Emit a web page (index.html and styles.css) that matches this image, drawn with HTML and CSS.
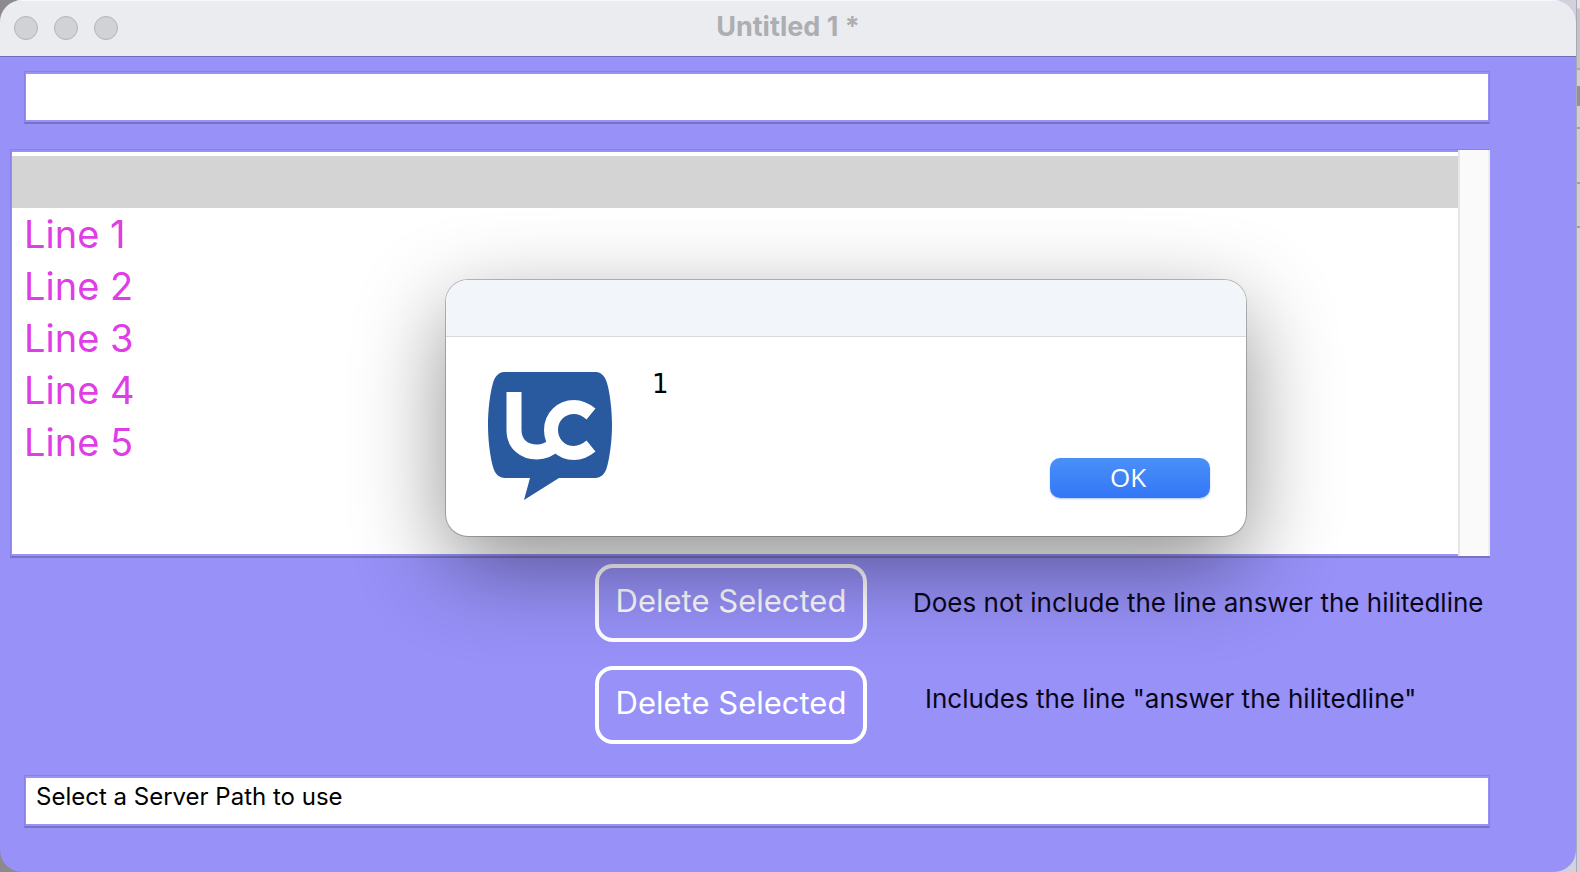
FILE: index.html
```html
<!DOCTYPE html>
<html lang="en">
<head>
    <meta charset="UTF-8">
    <meta name="viewport" content="width=device-width, initial-scale=1.0">
    <title>Untitled 1 *</title>
    <link rel="stylesheet" href="styles.css">
</head>
<body>
<div class="window">
    <header class="titlebar">
        <div class="window-buttons">
            <button type="button" class="window-button" aria-label="Close"></button>
            <button type="button" class="window-button" aria-label="Minimize"></button>
            <button type="button" class="window-button" aria-label="Zoom"></button>
        </div>
        <h1>Untitled 1 *</h1>
    </header>

    <main class="card">
        <input type="text" class="field" aria-label="Entry">

        <div class="list-field">
            <ul class="list">
                <li class="selected"></li>
                <li>Line 1</li>
                <li>Line 2</li>
                <li>Line 3</li>
                <li>Line 4</li>
                <li>Line 5</li>
            </ul>
            <div class="scrollbar"></div>
        </div>

        <div class="actions">
            <div class="action-row">
                <button type="button" class="delete-button">Delete Selected</button>
                <p class="note">Does not include the line answer the hilitedline</p>
            </div>
            <div class="action-row">
                <button type="button" class="delete-button">Delete Selected</button>
                <p class="note note-quoted">Includes the line "answer the hilitedline"</p>
            </div>
        </div>

        <input type="text" class="field" aria-label="Server path" value="Select a Server Path to use">
    </main>
</div>

<!-- Answer dialog -->
<div class="dialog" role="dialog" aria-label="Answer">
    <div class="dialog-header"></div>
    <div class="dialog-body">
        <svg class="logo" viewBox="0 0 124 128" aria-hidden="true">
            <path fill="#295a9f" d="M16 0H108C113 0 117 4 119 11C122 21 124 38 124 53C124 68 122 84 119 95C117 102 113 106 107 106H71L36 128L42 106H17C11 106 7 102 5 95C2 84 0 68 0 53C0 38 2 21 5 11C7 4 11 0 16 0Z"/>
            <path fill="none" stroke="#fff" stroke-width="15" d="M26 20V58C26 72 36 80 49 80C56 80 61 78 66 73"/>
            <path fill="none" stroke="#fff" stroke-width="14" d="M103 42C97 37 92 35 86 35C73 35 63 45 63 58C63 71 73 81 86 81C92 81 97 79 103 74"/>
        </svg>
        <p class="message">1</p>
        <button type="button" class="ok-button">OK</button>
    </div>
</div>

<!-- Edge of the window behind -->
<div class="behind">
    <span class="behind-top"></span>
    <span class="behind-tool"></span>
    <span class="behind-row"></span>
    <span class="behind-row behind-row-last"></span>
</div>
</body>
</html>
```

FILE: styles.css
```css
* {
    box-sizing: border-box;
}

body {
    margin: 0;
    min-height: 100vh;
    display: flex;
    overflow: hidden;
    font-family: Inter, "Liberation Sans", sans-serif;
    background: linear-gradient(90deg, #8d8a8b 50%, #d3d2dc 50%);
    color: #0a0618;
}

h1, p, ul {
    margin: 0;
    padding: 0;
}

button {
    font-family: inherit;
}

.window {
    flex: 1;
    min-height: 100vh;
    background-color: #9791f8;
    border-radius: 22px;
    overflow: hidden;
}

/* Title bar */
.titlebar {
    height: 57px;
    padding: 0 14px 2px;
    display: grid;
    grid-template-columns: 1fr auto 1fr;
    align-items: center;
    background-color: #ebecf0;
    border-top: 1px solid #f8f8fa;
    border-bottom: 1px solid #716cb9;
}

.titlebar h1 {
    font-size: 27px;
    line-height: 32px;
    padding-bottom: 2px;
    color: #adaeb1;
}

.window-buttons {
    display: flex;
    gap: 16px;
}

.window-button {
    width: 24px;
    height: 24px;
    padding: 0;
    border: 1px solid #b2b3b6;
    border-radius: 50%;
    background-color: #d1d2d5;
}

/* Card */
.card {
    padding: 14px 86px 0 10px;
    display: flex;
    flex-direction: column;
}

.field {
    height: 53px;
    margin: 0 0 0 14px;
    padding: 0 11px 10px;
    border: 1px solid #8781e4;
    border-bottom: 2px solid #7772c6;
    border-radius: 0;
    background-color: #fff;
    box-shadow: inset 1px 2px 0 #9791f8, inset -1px -2px 0 #9791f8;
    font-family: inherit;
    font-size: 24px;
    color: #000;
}

.list-field {
    display: flex;
    margin-top: 25px;
    border: 1px solid #8781e4;
    border-bottom: 2px solid #7772c6;
    border-right: 0;
}

.list {
    flex: 1;
    min-height: 406px;
    padding-top: 4px;
    list-style-type: none;
    background-color: #fff;
    border: 1px solid #9791f8;
    border-top-width: 2px;
    border-bottom-width: 2px;
    border-right: 0;
}

.list li {
    height: 52px;
    padding-left: 12px;
    font-size: 38px;
    line-height: 52px;
    color: #df3de6;
}

.list .selected {
    background-color: #d4d4d4;
}

.scrollbar {
    width: 32px;
    background-color: #fafafa;
    border-left: 2px solid #e6e6e6;
    border-right: 2px solid #ededed;
}

.actions {
    margin: 6px 0 31px 585px;
    display: flex;
    flex-direction: column;
    gap: 24px;
}

.action-row {
    display: flex;
    align-items: center;
    gap: 46px;
}

.delete-button {
    width: 272px;
    height: 78px;
    padding: 0 0 6px;
    border: 4px solid #fff;
    border-radius: 18px;
    background-color: transparent;
    font-size: 31px;
    color: #fff;
    white-space: nowrap;
}

.note {
    font-size: 26px;
    line-height: 32px;
    white-space: nowrap;
}

.note-quoted {
    padding: 0 0 12px 12px;
}

/* Dialog */
.dialog {
    position: absolute;
    top: 280px;
    left: 446px;
    width: 800px;
    background-color: #fff;
    border-radius: 22px;
    box-shadow: 0 0 0 1px rgba(0, 0, 0, 0.24), 0 30px 90px rgba(0, 0, 0, 0.44);
}

.dialog-header {
    height: 57px;
    background-color: #f2f6fa;
    border-bottom: 1px solid #d5dade;
    border-radius: 22px 22px 0 0;
}

.dialog-body {
    padding: 35px 36px 36px 42px;
    display: flex;
}

.logo {
    width: 124px;
    height: 128px;
}

.message {
    flex: 1;
    padding-left: 40px;
    font-family: "DejaVu Sans", sans-serif;
    font-size: 26px;
    line-height: 24px;
    color: #000;
}

.ok-button {
    width: 160px;
    height: 40px;
    align-self: flex-end;
    margin-bottom: 2px;
    padding: 0 4px 2px 0;
    border: 0;
    border-radius: 10px;
    background: linear-gradient(#4a90f9, #3376f6);
    box-shadow: 0 1px 2px rgba(51, 118, 246, 0.4);
    font-family: "Open Sans", "Noto Sans", sans-serif;
    font-size: 26px;
    line-height: 36px;
    color: #fff;
}

/* Window behind */
.behind {
    width: 4px;
    display: flex;
    flex-direction: column;
    border-left: 1px solid #aaa9b5;
    background-color: #d3d2dc;
}

.behind-top {
    height: 70px;
    background: linear-gradient(#e4e4e5 8px, #c4c4c6 9px, #c4c4c6);
    border-bottom: 2px solid #a6a8b8;
}

.behind-tool {
    height: 59px;
    background: linear-gradient(#d0d0d1 16px, #929294 16px, #929294 36px, #d0d0d1 36px);
    border-bottom: 2px solid #a2a2a5;
}

.behind-row {
    height: 55px;
    background-color: #d0d0d1;
    border-bottom: 2px solid #a2a2a5;
}

.behind-row-last {
    height: 44px;
}
```
